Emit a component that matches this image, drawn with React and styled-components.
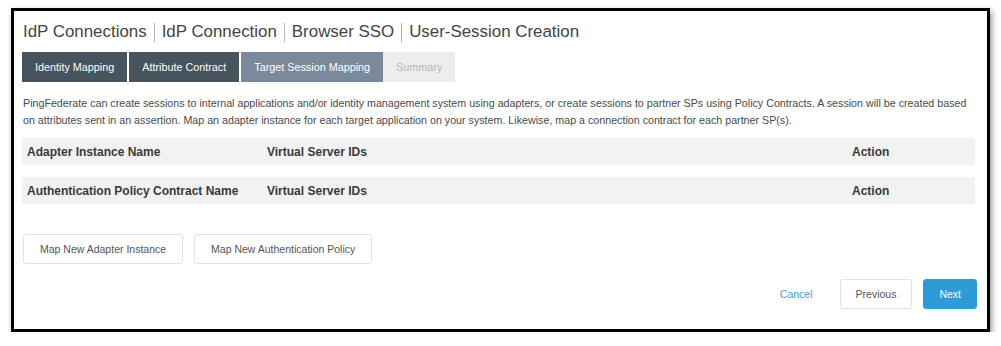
import React from "react";
import styled, { createGlobalStyle } from "styled-components";

const Global = createGlobalStyle`
  html, body { margin: 0; padding: 0; background: #fff; }
  body { font-family: "Liberation Sans", Arial, sans-serif; }
`;

const Frame = styled.div`
  box-sizing: border-box;
  margin: 8px 0 0 11px;
  width: 979px;
  height: 324px;
  border: 3px solid #000;
  box-shadow: 2px 3px 6px rgba(0, 0, 0, 0.4);
  padding: 11px 10px 0 8px;
  display: flex;
  flex-direction: column;
`;

const Title = styled.h1`
  margin: 0 0 0 1px;
  font-size: 16.9px;
  line-height: 20px;
  font-weight: normal;
  color: #444;
  display: flex;
  align-items: center;
`;

const Sep = styled.span`
  display: inline-block;
  width: 1px;
  height: 19px;
  background: #b5b5b5;
  margin: 0 7px;
`;

const Tabs = styled.div`
  display: flex;
  gap: 2px;
  margin-top: 10px;
`;

const Tab = styled.div`
  height: 30px;
  padding: 0 13px;
  display: flex;
  align-items: center;
  font-size: 10.8px;
  color: ${(p) => (p.$state === "todo" ? "#b6b6b6" : "#fff")};
  background: ${(p) =>
    p.$state === "done" ? "#47535d" : p.$state === "active" ? "#7a8a9b" : "#ededed"};
  margin-left: ${(p) => (p.$state === "todo" ? "-2px" : "0")};
`;

const Description = styled.p`
  margin: 13px 0 0 1px;
  font-size: 10.7px;
  line-height: 17px;
  color: #4a4a4a;
`;

const Row = styled.div`
  display: grid;
  grid-template-columns: 240px 585px 1fr;
  align-items: center;
  height: 27px;
  margin-top: ${(p) => p.$mt}px;
  margin-right: 2px;
  padding-left: 5px;
  background: #f2f2f2;
  font-size: 12px;
  font-weight: bold;
  color: #3a3a3a;
`;

const Actions = styled.div`
  display: flex;
  gap: 11px;
  margin-top: 30px;
  margin-left: 1px;
`;

const Button = styled.button`
  box-sizing: border-box;
  height: 30px;
  padding: 0 ${(p) => p.$pad || 16}px;
  border: 1px solid #e2e2e2;
  border-radius: 3px;
  background: ${(p) => (p.$primary ? "#2d9bd6" : "#fff")};
  border-color: ${(p) => (p.$primary ? "#2d9bd6" : "#e2e2e2")};
  color: ${(p) => (p.$primary ? "#fff" : "#555")};
  font-family: "Liberation Sans", Arial, sans-serif;
  font-size: 10.5px;
  cursor: pointer;
`;

const Footer = styled.div`
  display: flex;
  justify-content: flex-end;
  align-items: center;
  gap: 11px;
  margin-top: 15px;
`;

const LinkButton = styled.button`
  border: none;
  background: none;
  padding: 0;
  margin-right: 16px;
  color: #3f9fd8;
  font-family: "Liberation Sans", Arial, sans-serif;
  font-size: 10.5px;
  cursor: pointer;
`;

const tabs = [
  ["Identity Mapping", "done"],
  ["Attribute Contract", "done"],
  ["Target Session Mapping", "active"],
  ["Summary", "todo"],
];

const crumbs = ["IdP Connections", "IdP Connection", "Browser SSO", "User-Session Creation"];

export default function App() {
  return (
    <>
      <Global />
      <Frame>
        <Title>
          {crumbs.map((c, i) => (
            <React.Fragment key={c}>
              {i > 0 && <Sep />}
              <span>{c}</span>
            </React.Fragment>
          ))}
        </Title>
        <Tabs>
          {tabs.map(([t, s]) => (
            <Tab key={t} $state={s}>
              {t}
            </Tab>
          ))}
        </Tabs>
        <Description>
          PingFederate can create sessions to internal applications and/or identity management system
          using adapters, or create sessions to partner SPs using Policy Contracts. A session will be
          created based on attributes sent in an assertion. Map an adapter instance for each target
          application on your system. Likewise, map a connection contract for each partner SP(s).
        </Description>
        <Row $mt={9}>
          <span>Adapter Instance Name</span>
          <span>Virtual Server IDs</span>
          <span>Action</span>
        </Row>
        <Row $mt={12}>
          <span>Authentication Policy Contract Name</span>
          <span>Virtual Server IDs</span>
          <span>Action</span>
        </Row>
        <Actions>
          <Button>Map New Adapter Instance</Button>
          <Button>Map New Authentication Policy</Button>
        </Actions>
        <Footer>
          <LinkButton>Cancel</LinkButton>
          <Button $pad={15}>Previous</Button>
          <Button $primary $pad={15}>Next</Button>
        </Footer>
      </Frame>
    </>
  );
}
